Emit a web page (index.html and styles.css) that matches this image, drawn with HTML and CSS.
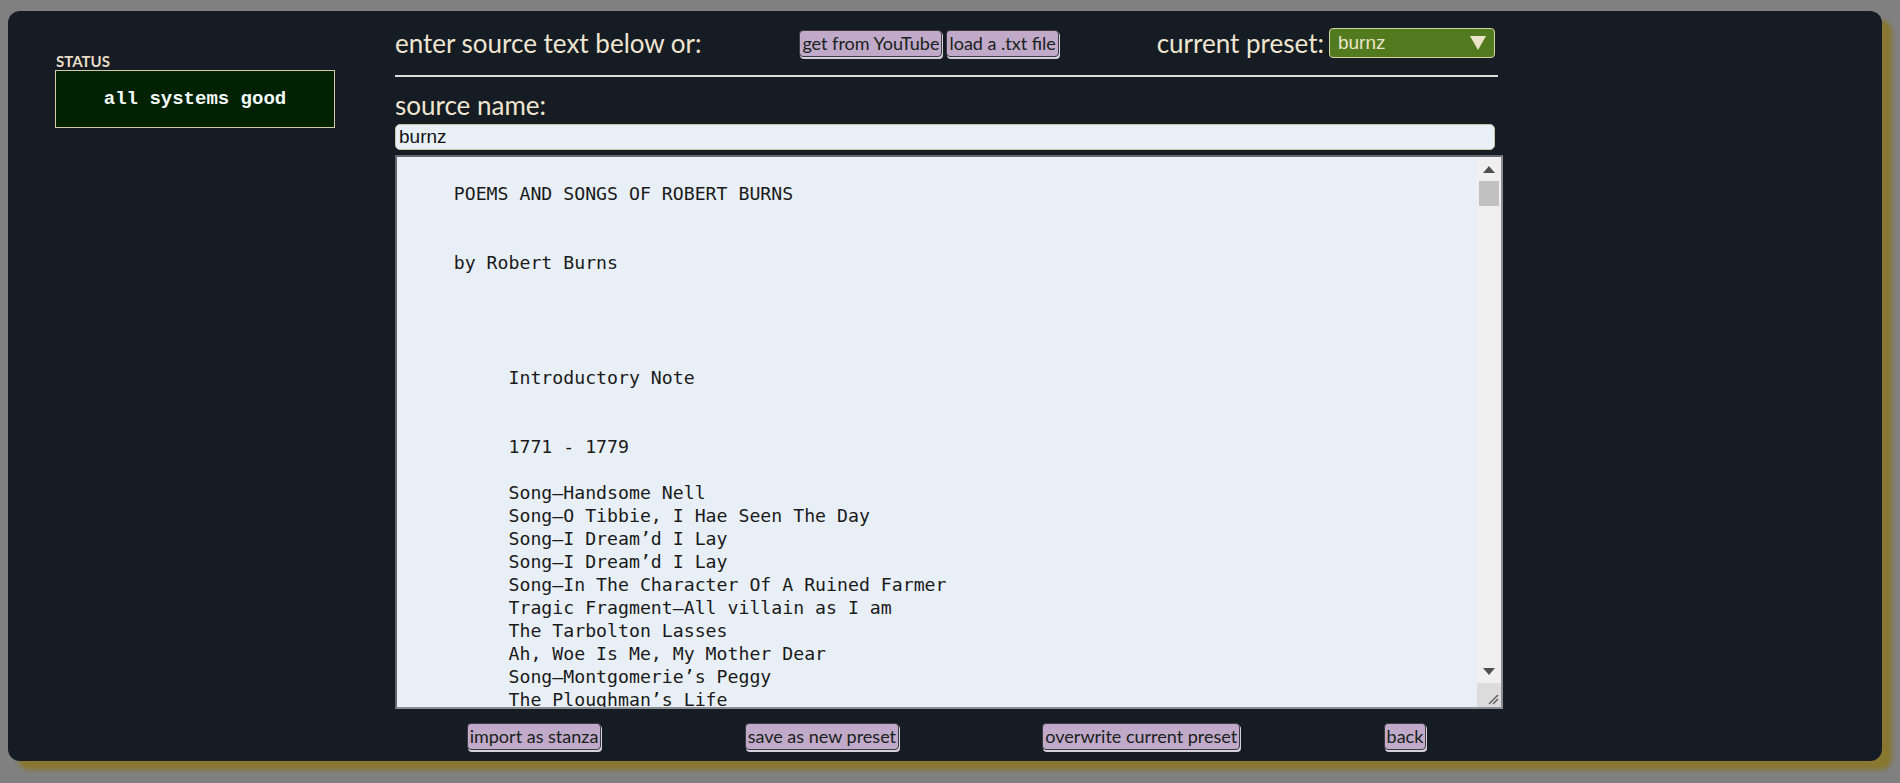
FILE: index.html
```html
<!DOCTYPE html>
<html lang="en">
<head>
<meta charset="utf-8">
<title>source text</title>
<link rel="stylesheet" href="styles.css">
</head>
<body>
<div class="panel">
  <aside class="sidebar">
    <div class="status-label">STATUS</div>
    <div class="status-box">all systems good</div>
  </aside>
  <main class="main">
    <div class="header-row">
      <span class="heading">enter source text below or:</span>
      <div class="btn-group">
        <button class="btn">get from YouTube</button>
        <button class="btn">load a .txt file</button>
      </div>
      <div class="preset">
        <span class="heading">current preset:</span>
        <div class="select">
          <span class="select-value">burnz</span>
          <svg class="select-arrow" width="16" height="14" viewBox="0 0 16 14"><polygon points="0,0 16,0 8,14" fill="#ece4c8"/></svg>
        </div>
      </div>
    </div>
    <div class="rule"></div>
    <div class="heading name-label">source name:</div>
    <input class="name-input" type="text" value="burnz">
    <div class="text-frame">
      <textarea class="source-text" wrap="off" spellcheck="false">

     POEMS AND SONGS OF ROBERT BURNS


     by Robert Burns




          Introductory Note


          1771 - 1779

          Song—Handsome Nell
          Song—O Tibbie, I Hae Seen The Day
          Song—I Dream’d I Lay
          Song—I Dream’d I Lay
          Song—In The Character Of A Ruined Farmer
          Tragic Fragment—All villain as I am
          The Tarbolton Lasses
          Ah, Woe Is Me, My Mother Dear
          Song—Montgomerie’s Peggy
          The Ploughman’s Life
          The Ronalds Of The Bennals
          Song—Here’s To Thy Health, My Bonie Lass
          The Lass Of Cessnock Banks
          Song—Bonie Peggy Alison
          Song—Mary Morison
</textarea>
      <div class="scrollbar">
        <div class="sb-btn">
          <svg width="12" height="7" viewBox="0 0 12 7"><polygon points="0,7 12,7 6,0" fill="#505050"/></svg>
        </div>
        <div class="sb-track"><div class="sb-thumb"></div></div>
        <div class="sb-btn">
          <svg width="12" height="7" viewBox="0 0 12 7"><polygon points="0,0 12,0 6,7" fill="#505050"/></svg>
        </div>
        <div class="sb-resizer">
          <svg width="12" height="12" viewBox="0 0 12 12"><line x1="2" y1="11" x2="11" y2="2" stroke="#555" stroke-width="1.2"/><line x1="6" y1="11" x2="11" y2="6" stroke="#555" stroke-width="1.2"/></svg>
        </div>
      </div>
    </div>
    <div class="actions">
      <button class="btn">import as stanza</button>
      <button class="btn">save as new preset</button>
      <button class="btn">overwrite current preset</button>
      <button class="btn">back</button>
    </div>
  </main>
</div>
</body>
</html>
```

FILE: styles.css
```css
html {
  background: #808080;
  min-height: 100%;
}
body {
  margin: 0;
  padding: 11px 18px 22px 8px;
  font-family: "Lato", "Noto Sans", sans-serif;
}
.panel {
  display: flex;
  height: 750px;
  background: #151c23;
  border-radius: 12px;
  box-shadow: 10px 9px 4px #877731;
  padding-left: 47px;
  box-sizing: border-box;
}
.sidebar {
  width: 280px;
  padding-top: 42px;
  flex-shrink: 0;
}
.status-label {
  font-size: 15px;
  line-height: 16px;
  font-weight: 700;
  color: #e8dcc6;
  padding-left: 1px;
}
.status-box {
  margin-top: 1px;
  height: 56px;
  border: 1px solid #d4caa6;
  background: #012201;
  display: flex;
  align-items: center;
  justify-content: center;
  font-family: "Liberation Mono", "Courier New", monospace;
  font-weight: 700;
  font-size: 19px;
  color: #f4fbfb;
}
.main {
  margin-left: 60px;
  width: 1103px;
  padding-top: 15px;
  display: flex;
  flex-direction: column;
}
.heading {
  font-size: 26px;
  color: #efe5d1;
}
.header-row {
  height: 34px;
  display: flex;
  align-items: center;
  justify-content: space-between;
}
.btn-group {
  display: flex;
  gap: 4px;
}
.btn {
  font-family: "Lato", "Noto Sans", sans-serif;
  font-size: 18px;
  height: 27px;
  padding: 0 2px;
  background: #c1aac9;
  color: #18211a;
  border: 1px solid #3d3a44;
  border-radius: 4px;
  box-shadow: 1px 2px 0 #d5d0dc;
  line-height: 25px;
}
.preset {
  display: flex;
  align-items: center;
  gap: 5px;
  margin-right: 3px;
}
.select {
  width: 166px;
  height: 30px;
  box-sizing: border-box;
  background: #527a1e;
  border: 1px solid #d8d2a2;
  border-radius: 4px;
  display: flex;
  align-items: center;
  justify-content: space-between;
  padding: 0 8px 0 8px;
}
.select-value {
  font-family: "Liberation Sans", Arial, sans-serif;
  font-size: 19px;
  color: #ece4c8;
}
.rule {
  margin-top: 15px;
  height: 2px;
  background: #dcdcdc;
}
.name-label {
  margin-top: 14px;
  line-height: 28px;
}
.name-input {
  margin-top: 5px;
  width: 1100px;
  height: 26px;
  box-sizing: border-box;
  border: 1px solid #c9c3a8;
  border-radius: 5px;
  background: #e8eff7;
  font-family: "Liberation Sans", Arial, sans-serif;
  font-size: 19px;
  color: #121212;
  padding: 0 3px;
  outline: none;
}
.text-frame {
  margin-top: 5px;
  width: 1108px;
  height: 554px;
  box-sizing: border-box;
  border: 2px solid #62676d;
  border-right-color: #8a8e93;
  border-bottom-color: #8a8e93;
  background: #e8eff7;
  display: flex;
}
.source-text {
  flex: 1;
  border: none;
  outline: none;
  resize: none;
  overflow: hidden;
  background: transparent;
  padding: 2px;
  margin: 0;
  font-family: "DejaVu Sans Mono", "Liberation Mono", monospace;
  font-size: 18.2px;
  line-height: 23px;
  color: #1a1a1a;
  white-space: pre;
}
.scrollbar {
  width: 24px;
  background: #f0f0f0;
  display: flex;
  flex-direction: column;
}
.sb-btn {
  height: 24px;
  display: flex;
  align-items: center;
  justify-content: center;
}
.sb-track {
  flex: 1;
  padding: 0 2px;
}
.sb-thumb {
  height: 25px;
  background: #c1c1c1;
}
.sb-resizer {
  height: 24px;
  background: #dcdcdc;
  display: flex;
  align-items: flex-end;
  justify-content: flex-end;
  padding: 0 2px 2px 0;
  box-sizing: border-box;
}
.actions {
  margin-top: 14px;
  display: flex;
  justify-content: space-around;
}
```
